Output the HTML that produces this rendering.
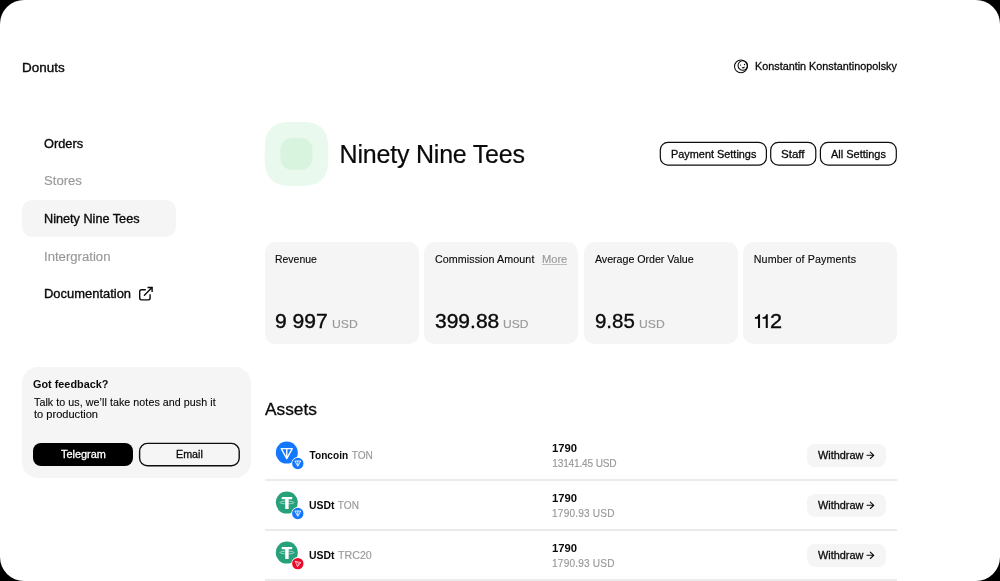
<!DOCTYPE html>
<html>
<head>
<meta charset="utf-8">
<title>Donuts</title>
<style>
*{box-sizing:border-box;margin:0;padding:0}
html,body{width:1000px;height:581px;background:#000;overflow:hidden}
body{font-family:"Liberation Sans",sans-serif;color:#0a0a0a;position:relative}
#app{position:absolute;left:0;top:0;width:1000px;height:581px;background:#fff;border-radius:24px;overflow:hidden;will-change:transform}
.b{position:absolute}
.t{position:absolute;white-space:pre;font-family:"Liberation Sans",sans-serif}
svg{position:absolute;left:0;top:0;overflow:visible}
</style>
</head>
<body>
<div id="app">
<div class="b" style="left:22px;top:200.2px;width:154.3px;height:37.0px;border-radius:10px;background:#f5f5f5;"></div>
<div class="b" style="left:22.0px;top:366.7px;width:228.8px;height:111.2px;border-radius:16px;background:#f5f5f5;"></div>
<div class="b" style="left:33.4px;top:443.0px;width:100.0px;height:23.4px;border-radius:8px;background:#000;"></div>
<div class="b" style="left:264.55px;top:241.8px;width:154.0px;height:102.2px;border-radius:10.5px;background:#f5f5f5;"></div>
<div class="b" style="left:424.05px;top:241.8px;width:154.0px;height:102.2px;border-radius:10.5px;background:#f5f5f5;"></div>
<div class="b" style="left:583.55px;top:241.8px;width:154.0px;height:102.2px;border-radius:10.5px;background:#f5f5f5;"></div>
<div class="b" style="left:743.05px;top:241.8px;width:154.0px;height:102.2px;border-radius:10.5px;background:#f5f5f5;"></div>
<div class="b" style="left:542.2px;top:263.5px;width:24.4px;height:1.0px;border-radius:0px;background:#bcbcbc;"></div>
<div class="b" style="left:264.8px;top:479.35px;width:632.2px;height:1.65px;border-radius:0px;background:#ebebeb;"></div>
<div class="b" style="left:807.1px;top:443.9px;width:78.8px;height:23.0px;border-radius:8px;background:#f5f5f5;"></div>
<div class="b" style="left:264.8px;top:529.35px;width:632.2px;height:1.65px;border-radius:0px;background:#ebebeb;"></div>
<div class="b" style="left:807.1px;top:493.9px;width:78.8px;height:23.0px;border-radius:8px;background:#f5f5f5;"></div>
<div class="b" style="left:264.8px;top:579.35px;width:632.2px;height:1.65px;border-radius:0px;background:#ebebeb;"></div>
<div class="b" style="left:807.1px;top:543.9px;width:78.8px;height:23.0px;border-radius:8px;background:#f5f5f5;"></div>
<svg width="1000" height="581" viewBox="0 0 1000 581">
<rect x="139.60" y="443.40" width="99.60" height="22.40" rx="7.80" fill="none" stroke="#0d0d0d" stroke-width="1.4"/>
<rect x="660.30" y="142.40" width="106.10" height="22.70" rx="7.70" fill="#fff" stroke="#0d0d0d" stroke-width="1.2"/>
<rect x="770.70" y="142.40" width="45.10" height="22.70" rx="7.70" fill="#fff" stroke="#0d0d0d" stroke-width="1.2"/>
<rect x="820.40" y="142.40" width="75.90" height="22.70" rx="7.70" fill="#fff" stroke="#0d0d0d" stroke-width="1.2"/>
<path d="M328.30 153.90 L328.22 160.55 L327.99 164.27 L327.60 167.32 L327.05 169.97 L326.34 172.32 L325.48 174.43 L324.46 176.33 L323.28 178.04 L321.93 179.57 L320.41 180.93 L318.72 182.12 L316.83 183.16 L314.74 184.03 L312.42 184.74 L309.80 185.29 L306.78 185.68 L303.09 185.92 L296.50 186.00 L289.91 185.92 L286.22 185.68 L283.20 185.29 L280.58 184.74 L278.26 184.03 L276.17 183.16 L274.28 182.12 L272.59 180.93 L271.07 179.57 L269.72 178.04 L268.54 176.33 L267.52 174.43 L266.66 172.32 L265.95 169.97 L265.40 167.32 L265.01 164.27 L264.78 160.55 L264.70 153.90 L264.78 147.25 L265.01 143.53 L265.40 140.48 L265.95 137.83 L266.66 135.48 L267.52 133.37 L268.54 131.47 L269.72 129.76 L271.07 128.23 L272.59 126.87 L274.28 125.68 L276.17 124.64 L278.26 123.77 L280.58 123.06 L283.20 122.51 L286.22 122.12 L289.91 121.88 L296.50 121.80 L303.09 121.88 L306.78 122.12 L309.80 122.51 L312.42 123.06 L314.74 123.77 L316.83 124.64 L318.72 125.68 L320.41 126.87 L321.93 128.23 L323.28 129.76 L324.46 131.47 L325.48 133.37 L326.34 135.48 L327.05 137.83 L327.60 140.48 L327.99 143.53 L328.22 147.25Z" fill="#e9f9ed"/>
<path d="M312.50 153.90 L312.46 156.74 L312.32 158.54 L312.11 160.07 L311.80 161.43 L311.41 162.66 L310.93 163.77 L310.36 164.79 L309.71 165.71 L308.97 166.55 L308.14 167.29 L307.22 167.95 L306.21 168.52 L305.10 169.00 L303.88 169.40 L302.53 169.70 L301.01 169.92 L299.22 170.06 L296.40 170.10 L293.58 170.06 L291.79 169.92 L290.27 169.70 L288.92 169.40 L287.70 169.00 L286.59 168.52 L285.58 167.95 L284.66 167.29 L283.83 166.55 L283.09 165.71 L282.44 164.79 L281.87 163.77 L281.39 162.66 L281.00 161.43 L280.69 160.07 L280.48 158.54 L280.34 156.74 L280.30 153.90 L280.34 151.06 L280.48 149.26 L280.69 147.73 L281.00 146.37 L281.39 145.14 L281.87 144.03 L282.44 143.01 L283.09 142.09 L283.83 141.25 L284.66 140.51 L285.58 139.85 L286.59 139.28 L287.70 138.80 L288.92 138.40 L290.27 138.10 L291.79 137.88 L293.58 137.74 L296.40 137.70 L299.22 137.74 L301.01 137.88 L302.53 138.10 L303.88 138.40 L305.10 138.80 L306.21 139.28 L307.22 139.85 L308.14 140.51 L308.97 141.25 L309.71 142.09 L310.36 143.01 L310.93 144.03 L311.41 145.14 L311.80 146.37 L312.11 147.73 L312.32 149.26 L312.46 151.06Z" fill="#d8f3de"/>
<g fill="none" stroke="#0a0a0a" stroke-width="1.05"><circle cx="740.9" cy="66.3" r="6.4"/><circle cx="742.8" cy="65.5" r="4.75"/></g>
<circle cx="740.6" cy="65.1" r="0.65" fill="#0a0a0a"/><circle cx="744.5" cy="64.5" r="0.65" fill="#0a0a0a"/>
<path d="M741.6 67.2 Q743.3 67.6 745 66.6 Q744.6 68.6 743.2 68.6 Q742 68.5 741.6 67.2Z" fill="#0a0a0a"/>
<g fill="none" stroke="#0a0a0a" stroke-width="1.4" stroke-linejoin="round"><path d="M145.8 289.7H141.5a1.8 1.8 0 0 0-1.8 1.8V298.1a1.8 1.8 0 0 0 1.8 1.8H148.3a1.8 1.8 0 0 0 1.8-1.8V294.2"/><path d="M144.4 295.2L152 287.6" stroke-linecap="round"/><path d="M147.5 287.5H152.1V292.1"/></g>
<path d="M867 455.3H873.7M870.3 452.1L873.8 455.3L870.3 458.5" fill="none" stroke="#0a0a0a" stroke-width="1.1" stroke-linecap="round" stroke-linejoin="round"/>
<path d="M867 505.3H873.7M870.3 502.1L873.8 505.3L870.3 508.5" fill="none" stroke="#0a0a0a" stroke-width="1.1" stroke-linecap="round" stroke-linejoin="round"/>
<path d="M867 555.3H873.7M870.3 552.1L873.8 555.3L870.3 558.5" fill="none" stroke="#0a0a0a" stroke-width="1.1" stroke-linecap="round" stroke-linejoin="round"/>
<path d="M760.05 314.2V328.05H758.0V318.7H754.9V317.1C756.7 317.1 758.1 316.2 758.45 314.2Z" fill="#0a0a0a"/>
<path d="M767.8 314.2V328.05H765.75V318.7H762.65V317.1C764.45 317.1 765.85 316.2 766.2 314.2Z" fill="#0a0a0a"/>
<circle cx="286.8" cy="452.6" r="11" fill="#1478ff"/><path d="M281.25 448.59H292.25L286.75 458.60Z M286.75 448.59V457.80" fill="none" stroke="#fff" stroke-width="1.35" stroke-linejoin="round"/><circle cx="297.8" cy="463.5" r="6.5" fill="#fff"/><circle cx="297.8" cy="463.5" r="5.7" fill="#1478ff"/><path d="M294.90 461.02H300.70L297.80 466.30Z M297.80 461.02V465.50" fill="none" stroke="#fff" stroke-width="0.85" stroke-linejoin="round"/>
<circle cx="286.8" cy="502.6" r="11" fill="#26a17b"/><ellipse cx="287.0" cy="502.5" rx="7.0" ry="1.4" fill="none" stroke="#fff" stroke-width="0.55"/><path d="M281.7 497.05H292.2V499.25H288.65000000000003V509.1H285.25V499.25H281.7Z" fill="#fff"/><circle cx="297.8" cy="513.5" r="6.5" fill="#fff"/><circle cx="297.8" cy="513.5" r="5.7" fill="#1478ff"/><path d="M294.90 511.02H300.70L297.80 516.30Z M297.80 511.02V515.50" fill="none" stroke="#fff" stroke-width="0.85" stroke-linejoin="round"/>
<circle cx="286.8" cy="552.6" r="11" fill="#26a17b"/><ellipse cx="287.0" cy="552.5" rx="7.0" ry="1.4" fill="none" stroke="#fff" stroke-width="0.55"/><path d="M281.7 547.0500000000001H292.2V549.25H288.65000000000003V559.1H285.25V549.25H281.7Z" fill="#fff"/><circle cx="297.8" cy="563.6" r="6.5" fill="#fff"/><circle cx="297.8" cy="563.6" r="5.7" fill="#eb0a29"/><path d="M295.2 561.3000000000001L300.8 562.5L297.5 566.7Z M295.2 561.3000000000001L298.5 563.4L297.5 566.7 M298.5 563.4L300.8 562.5" fill="none" stroke="#fff" stroke-width="0.6" stroke-linejoin="round"/>
</svg>
<div class="t" style="left:21.63px;top:61.65px;font-size:12.2px;line-height:12.2px;letter-spacing:0.0px;color:#0a0a0a;-webkit-text-stroke:0.35px #0a0a0a;transform:scaleX(1.1043);transform-origin:0 0;">Donuts</div>
<div class="t" style="left:754.56px;top:62.2px;font-size:10.2px;line-height:10.2px;letter-spacing:0.0px;color:#0a0a0a;-webkit-text-stroke:0.28px #0a0a0a;transform:scaleX(1.0618);transform-origin:0 0;">Konstantin Konstantinopolsky</div>
<div class="t" style="left:43.6px;top:138.0px;font-size:12.2px;line-height:12.2px;letter-spacing:0.0px;color:#0a0a0a;-webkit-text-stroke:0.35px #0a0a0a;transform:scaleX(1.0475);transform-origin:0 0;">Orders</div>
<div class="t" style="left:43.54px;top:175.2px;font-size:12.3px;line-height:12.3px;letter-spacing:0.0px;color:#999999;-webkit-text-stroke:0.15px #999999;transform:scaleX(1.0673);transform-origin:0 0;">Stores</div>
<div class="t" style="left:43.53px;top:213.2px;font-size:12.2px;line-height:12.2px;letter-spacing:0.0px;color:#0a0a0a;-webkit-text-stroke:0.35px #0a0a0a;transform:scaleX(1.0393);transform-origin:0 0;">Ninety Nine Tees</div>
<div class="t" style="left:43.6px;top:251.0px;font-size:12.3px;line-height:12.3px;letter-spacing:0.0px;color:#999999;-webkit-text-stroke:0.15px #999999;transform:scaleX(1.0686);transform-origin:0 0;">Intergration</div>
<div class="t" style="left:43.63px;top:288.1px;font-size:12.2px;line-height:12.2px;letter-spacing:0.0px;color:#0a0a0a;-webkit-text-stroke:0.35px #0a0a0a;transform:scaleX(1.0617);transform-origin:0 0;">Documentation</div>
<div class="t" style="left:32.78px;top:379.0px;font-size:10.5px;line-height:10.5px;letter-spacing:0.0px;color:#0a0a0a;font-weight:bold;transform:scaleX(1.0334);transform-origin:0 0;">Got feedback?</div>
<div class="t" style="left:34.01px;top:397.1px;font-size:10.7px;line-height:10.7px;letter-spacing:0.059px;color:#0a0a0a;-webkit-text-stroke:0.12px #0a0a0a;">Talk to us, we’ll take notes and push it</div>
<div class="t" style="left:33.68px;top:409.2px;font-size:10.7px;line-height:10.7px;letter-spacing:0.0px;color:#0a0a0a;-webkit-text-stroke:0.12px #0a0a0a;transform:scaleX(1.0358);transform-origin:0 0;">to production</div>
<div class="t" style="left:60.6px;top:450.05px;font-size:10.2px;line-height:10.2px;letter-spacing:0.0px;color:#ffffff;-webkit-text-stroke:0.28px #ffffff;transform:scaleX(1.0704);transform-origin:0 0;">Telegram</div>
<div class="t" style="left:175.59px;top:450.05px;font-size:10.2px;line-height:10.2px;letter-spacing:0.0px;color:#0a0a0a;-webkit-text-stroke:0.28px #0a0a0a;transform:scaleX(1.052);transform-origin:0 0;">Email</div>
<div class="t" style="left:339.61px;top:142.05px;font-size:25.0px;line-height:25.0px;letter-spacing:-0.21px;color:#0a0a0a;-webkit-text-stroke:0.2px #0a0a0a;">Ninety Nine Tees</div>
<div class="t" style="left:670.55px;top:149.95px;font-size:10.2px;line-height:10.2px;letter-spacing:0.0px;color:#0a0a0a;-webkit-text-stroke:0.28px #0a0a0a;transform:scaleX(1.0691);transform-origin:0 0;">Payment Settings</div>
<div class="t" style="left:780.66px;top:149.95px;font-size:10.2px;line-height:10.2px;letter-spacing:0.0px;color:#0a0a0a;-webkit-text-stroke:0.28px #0a0a0a;transform:scaleX(1.1339);transform-origin:0 0;">Staff</div>
<div class="t" style="left:830.57px;top:149.95px;font-size:10.2px;line-height:10.2px;letter-spacing:0.0px;color:#0a0a0a;-webkit-text-stroke:0.28px #0a0a0a;transform:scaleX(1.0773);transform-origin:0 0;">All Settings</div>
<div class="t" style="left:274.61px;top:254.0px;font-size:10.7px;line-height:10.7px;letter-spacing:0.0px;color:#0a0a0a;-webkit-text-stroke:0.12px #0a0a0a;transform:scaleX(0.9777);transform-origin:0 0;">Revenue</div>
<div class="t" style="left:434.95px;top:254.0px;font-size:10.7px;line-height:10.7px;letter-spacing:0.088px;color:#0a0a0a;-webkit-text-stroke:0.12px #0a0a0a;">Commission Amount</div>
<div class="t" style="left:541.57px;top:254.0px;font-size:10.7px;line-height:10.7px;letter-spacing:0.0px;color:#999999;-webkit-text-stroke:0.15px #999999;transform:scaleX(1.037);transform-origin:0 0;">More</div>
<div class="t" style="left:594.94px;top:254.0px;font-size:10.7px;line-height:10.7px;letter-spacing:-0.037px;color:#0a0a0a;-webkit-text-stroke:0.12px #0a0a0a;">Average Order Value</div>
<div class="t" style="left:753.75px;top:254.0px;font-size:10.7px;line-height:10.7px;letter-spacing:0.111px;color:#0a0a0a;-webkit-text-stroke:0.12px #0a0a0a;">Number of Payments</div>
<div class="t" style="left:274.51px;top:312.1px;font-size:19.5px;line-height:19.5px;letter-spacing:0.0px;color:#0a0a0a;-webkit-text-stroke:0.35px #0a0a0a;transform:scaleX(1.0812);transform-origin:0 0;">9 997</div>
<div class="t" style="left:331.5px;top:319.1px;font-size:11.5px;line-height:11.5px;letter-spacing:0.0px;color:#999999;-webkit-text-stroke:0.15px #999999;transform:scaleX(1.0592);transform-origin:0 0;">USD</div>
<div class="t" style="left:434.62px;top:312.1px;font-size:19.5px;line-height:19.5px;letter-spacing:0.0px;color:#0a0a0a;-webkit-text-stroke:0.35px #0a0a0a;transform:scaleX(1.0776);transform-origin:0 0;">399.88</div>
<div class="t" style="left:502.61px;top:319.1px;font-size:11.5px;line-height:11.5px;letter-spacing:0.0px;color:#999999;-webkit-text-stroke:0.15px #999999;transform:scaleX(1.05);transform-origin:0 0;">USD</div>
<div class="t" style="left:594.65px;top:312.1px;font-size:19.5px;line-height:19.5px;letter-spacing:0.0px;color:#0a0a0a;-webkit-text-stroke:0.35px #0a0a0a;transform:scaleX(1.0487);transform-origin:0 0;">9.85</div>
<div class="t" style="left:638.51px;top:319.1px;font-size:11.5px;line-height:11.5px;letter-spacing:0.0px;color:#999999;-webkit-text-stroke:0.15px #999999;transform:scaleX(1.059);transform-origin:0 0;">USD</div>
<div class="t" style="left:769.69px;top:312.1px;font-size:19.5px;line-height:19.5px;letter-spacing:0.0px;color:#0a0a0a;-webkit-text-stroke:0.35px #0a0a0a;transform:scaleX(1.1115);transform-origin:0 0;">2</div>
<div class="t" style="left:264.62px;top:402.15px;font-size:15.8px;line-height:15.8px;letter-spacing:0.0px;color:#0a0a0a;-webkit-text-stroke:0.3px #0a0a0a;transform:scaleX(1.0954);transform-origin:0 0;">Assets</div>
<div class="t" style="left:309.52px;top:451.05px;font-size:10.1px;line-height:10.1px;letter-spacing:0.029px;color:#0a0a0a;font-weight:bold;">Toncoin</div>
<div class="t" style="left:351.74px;top:451.05px;font-size:10.1px;line-height:10.1px;letter-spacing:-0.091px;color:#999999;-webkit-text-stroke:0.15px #999999;">TON</div>
<div class="t" style="left:308.63px;top:501.05px;font-size:10.1px;line-height:10.1px;letter-spacing:0.0px;color:#0a0a0a;font-weight:bold;transform:scaleX(1.0345);transform-origin:0 0;">USDt</div>
<div class="t" style="left:337.68px;top:501.05px;font-size:10.1px;line-height:10.1px;letter-spacing:0.097px;color:#999999;-webkit-text-stroke:0.15px #999999;">TON</div>
<div class="t" style="left:308.63px;top:551.05px;font-size:10.1px;line-height:10.1px;letter-spacing:0.0px;color:#0a0a0a;font-weight:bold;transform:scaleX(1.0345);transform-origin:0 0;">USDt</div>
<div class="t" style="left:337.58px;top:551.05px;font-size:10.1px;line-height:10.1px;letter-spacing:0.0px;color:#999999;-webkit-text-stroke:0.15px #999999;transform:scaleX(1.0565);transform-origin:0 0;">TRC20</div>
<div class="t" style="left:551.61px;top:443.8px;font-size:10.1px;line-height:10.1px;letter-spacing:0.0px;color:#0a0a0a;font-weight:bold;transform:scaleX(1.1192);transform-origin:0 0;">1790</div>
<div class="t" style="left:552.26px;top:459.05px;font-size:10.1px;line-height:10.1px;letter-spacing:-0.167px;color:#999999;-webkit-text-stroke:0.15px #999999;">13141.45 USD</div>
<div class="t" style="left:551.61px;top:493.8px;font-size:10.1px;line-height:10.1px;letter-spacing:0.0px;color:#0a0a0a;font-weight:bold;transform:scaleX(1.1192);transform-origin:0 0;">1790</div>
<div class="t" style="left:552.06px;top:509.05px;font-size:10.1px;line-height:10.1px;letter-spacing:0.19px;color:#999999;-webkit-text-stroke:0.15px #999999;">1790.93 USD</div>
<div class="t" style="left:551.61px;top:543.8px;font-size:10.1px;line-height:10.1px;letter-spacing:0.0px;color:#0a0a0a;font-weight:bold;transform:scaleX(1.1192);transform-origin:0 0;">1790</div>
<div class="t" style="left:552.06px;top:559.05px;font-size:10.1px;line-height:10.1px;letter-spacing:0.19px;color:#999999;-webkit-text-stroke:0.15px #999999;">1790.93 USD</div>
<div class="t" style="left:817.67px;top:451.1px;font-size:10.3px;line-height:10.3px;letter-spacing:0.0px;color:#0a0a0a;-webkit-text-stroke:0.28px #0a0a0a;transform:scaleX(1.0588);transform-origin:0 0;">Withdraw</div>
<div class="t" style="left:817.67px;top:501.1px;font-size:10.3px;line-height:10.3px;letter-spacing:0.0px;color:#0a0a0a;-webkit-text-stroke:0.28px #0a0a0a;transform:scaleX(1.0588);transform-origin:0 0;">Withdraw</div>
<div class="t" style="left:817.67px;top:551.1px;font-size:10.3px;line-height:10.3px;letter-spacing:0.0px;color:#0a0a0a;-webkit-text-stroke:0.28px #0a0a0a;transform:scaleX(1.0588);transform-origin:0 0;">Withdraw</div>
</div>
</body>
</html>
